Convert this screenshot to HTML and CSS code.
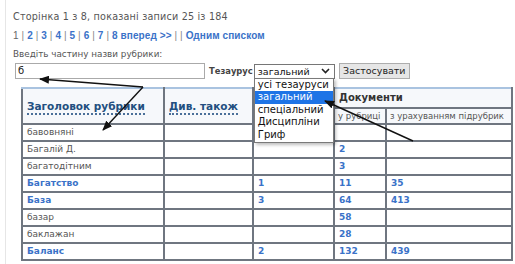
FILE: index.html
```html
<!DOCTYPE html>
<html lang="uk">
<head>
<meta charset="utf-8">
<title>Рубрики</title>
<link rel="stylesheet" href="styles.css">
</head>
<body>
<div class="page">
  <p class="info">Сторінка 1 з 8, показані записи 25 із 184</p>
  <p class="pager"><span class="cur">1</span> | <a href="#">2</a> | <a href="#">3</a> | <a href="#">4</a> | <a href="#">5</a> | <a href="#">6</a> | <a href="#">7</a> | <a href="#">8 вперед &gt;&gt;</a> | | <a href="#">Одним списком</a></p>
  <p class="label">Введіть частину назви рубрики:</p>
  <div class="form">
    <div class="input">б</div>
    <span class="thes">Тезаурус</span>
    <div class="select-wrap">
      <div class="select"><span>загальний</span><svg class="chev" width="9" height="6" viewBox="0 0 9 6"><path d="M1 1 L4.5 4.5 L8 1" fill="none" stroke="#222" stroke-width="1.6"/></svg></div>
      <ul class="options">
        <li>усі тезауруси</li>
        <li class="sel">загальний</li>
        <li>спеціальний</li>
        <li>Дисципліни</li>
        <li>Гриф</li>
      </ul>
    </div>
    <div class="btn">Застосувати</div>
  </div>
  <table class="grid">
    <colgroup>
      <col class="c1"><col class="c2"><col class="c3"><col class="c4"><col class="c5">
    </colgroup>
    <thead>
      <tr class="h1">
        <th rowspan="2" class="hl"><span class="dot">Заголовок рубрики</span></th>
        <th rowspan="2" class="hl"><span class="dot">Див. також</span></th>
        <th rowspan="2" class="hl"></th>
        <th colspan="2" class="hd">Документи</th>
      </tr>
      <tr class="h2">
        <th class="hs">у рубриці</th>
        <th class="hs">з урахуванням підрубрик</th>
      </tr>
    </thead>
    <tbody>
      <tr><td>бавовняні</td><td></td><td></td><td></td><td></td></tr>
      <tr><td>Багалій Д.</td><td></td><td></td><td class="n">2</td><td></td></tr>
      <tr><td>багатодітним</td><td></td><td></td><td class="n">3</td><td></td></tr>
      <tr><td class="b">Багатство</td><td></td><td class="n">1</td><td class="n">11</td><td class="n">35</td></tr>
      <tr><td class="b">База</td><td></td><td class="n">3</td><td class="n">64</td><td class="n">413</td></tr>
      <tr><td>базар</td><td></td><td></td><td class="n">58</td><td></td></tr>
      <tr><td>баклажан</td><td></td><td></td><td class="n">28</td><td></td></tr>
      <tr><td class="b">Баланс</td><td></td><td class="n">2</td><td class="n">132</td><td class="n">439</td></tr>
    </tbody>
  </table>
  <svg class="arrows" width="515" height="264" viewBox="0 0 515 264">
    <defs>
      <marker id="ah" markerWidth="10" markerHeight="8" refX="9" refY="4" orient="auto" markerUnits="userSpaceOnUse">
        <path d="M0 0 L10 4 L0 8 Z" fill="#111"/>
      </marker>
    </defs>
    <line x1="143" y1="87" x2="40" y2="79" stroke="#111" stroke-width="1.4" marker-end="url(#ah)"/>
    <line x1="143" y1="87" x2="103" y2="130" stroke="#111" stroke-width="1.4" marker-end="url(#ah)"/>
    <line x1="413" y1="141" x2="325" y2="101" stroke="#111" stroke-width="1.4" marker-end="url(#ah)"/>
  </svg>
</div>
</body>
</html>
```
FILE: styles.css
```css
html, body {
  margin: 0;
  padding: 0;
  background: #fff;
}
body {
  font-family: "DejaVu Sans", Verdana, sans-serif;
  font-size: 9px;
  color: #555;
  width: 515px;
  height: 264px;
  overflow: hidden;
}
.page {
  position: relative;
  margin-left: 5px;
  border-left: 1px solid #e6e6e6;
  padding: 10px 0 0 7px;
  height: 254px;
}
p { margin: 0; }
.info {
  line-height: 13px;
  font-size: 9.6px;
  letter-spacing: 0.2px;
}
.pager {
  margin-top: 7px;
  line-height: 12px;
  color: #888;
  font-family: "Liberation Sans", Arial, sans-serif;
  font-size: 10px;
  letter-spacing: 0.1px;
}
.pager a {
  color: #3a72c8;
  font-weight: bold;
  text-decoration: none;
}
.pager .cur { color: #666; }
.label {
  margin-top: 6px;
  line-height: 12px;
  font-size: 8.8px;
}
.form {
  display: flex;
  align-items: center;
  margin-top: 2px;
  height: 18px;
}
.input {
  width: 186px;
  height: 14px;
  margin-left: 2px;
  border: 1px solid #aaa;
  padding-left: 2px;
  line-height: 14px;
  font-size: 10px;
  color: #222;
}
.thes {
  margin-left: 4px;
  font-weight: bold;
  font-size: 8.4px;
  color: #444;
  white-space: nowrap;
}
.select-wrap {
  position: relative;
  margin-left: 1px;
}
.select {
  height: 13px;
  border: 1px solid #767676;
  display: flex;
  align-items: center;
  justify-content: space-between;
  padding: 0 4px 0 3px;
  box-sizing: content-box;
  width: 72px;
  color: #111;
  font-size: 9.5px;
}
.options {
  position: absolute;
  left: 0;
  top: 14px;
  width: 78px;
  margin: 0;
  padding: 0 0 1px;
  list-style: none;
  background: #fff;
  border: 1px solid #7a7a7a;
  box-shadow: 2px 2px 3px rgba(0,0,0,0.25);
  z-index: 2;
  font-size: 10px;
  color: #111;
}
.options li {
  height: 12.5px;
  line-height: 12px;
  padding-left: 3px;
}
.options li.sel {
  background: #1e74e6;
  color: #fff;
}
.btn {
  margin-left: 4px;
  width: 69px;
  height: 14px;
  border: 1px solid #adadad;
  background: #e6e6e6;
  text-align: center;
  line-height: 14px;
  color: #222;
  font-size: 9.5px;
}
.grid {
  margin-top: 7px;
  margin-left: 8px;
  border-collapse: collapse;
  table-layout: fixed;
  width: 490px;
}
.c1 { width: 142px; }
.c2 { width: 89px; }
.c3 { width: 81px; }
.c4 { width: 52px; }
.c5 { width: 126px; }
.grid th, .grid td {
  border: 2px solid #6f7680;
  padding: 0 4px;
  text-align: left;
  white-space: nowrap;
  overflow: hidden;
}
.grid thead tr.h1 th { border-top-color: #a9c3e0; }
.grid th { background: #f6f8fb; }
.h1 th.hl {
  height: 34px;
  font-size: 10.5px;
  color: #234f80;
}
.dot {
  border-bottom: 2px dotted #4a6f99;
  padding-bottom: 1px;
}
.h1 th.hd {
  height: 17px;
  font-size: 10px;
  color: #333;
}
.h2 th.hs {
  height: 14px;
  font-weight: normal;
  color: #555;
  font-size: 8.5px;
  padding: 0 3px;
}
.grid td {
  height: 15px;
  line-height: 13px;
  color: #555;
}
.grid td.b {
  color: #3a72c8;
  font-weight: bold;
}
.grid td.n {
  color: #3a72c8;
  font-weight: bold;
}
.arrows {
  position: absolute;
  left: -6px;
  top: 0;
  pointer-events: none;
  z-index: 3;
}
```
